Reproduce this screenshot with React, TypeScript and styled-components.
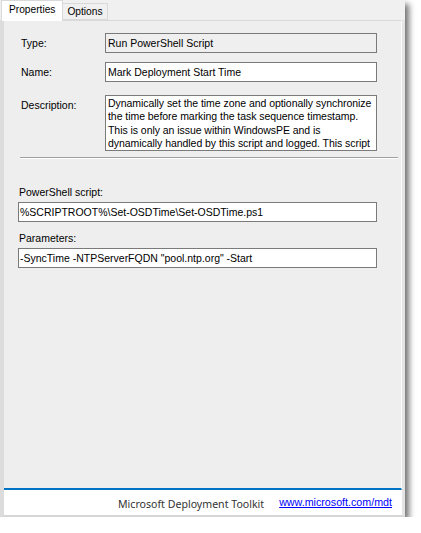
import React from 'react'
import styled, { createGlobalStyle } from 'styled-components'

const GlobalStyle = createGlobalStyle`
  html, body {
    margin: 0;
    padding: 0;
    background: #ffffff;
  }
  body {
    font-family: "Liberation Sans", Arial, sans-serif;
  }
`

const description = [
  'Dynamically set the time zone and optionally synchronize',
  'the time before marking the task sequence timestamp.',
  'This is only an issue within WindowsPE and is',
  'dynamically handled by this script and logged. This script',
]

const App: React.FC = () => {
  return (
    <>
      <GlobalStyle />
      <StyledWindow>
        <StyledTabStrip>
          <StyledTab active>Properties</StyledTab>
          <StyledTab>Options</StyledTab>
        </StyledTabStrip>
        <StyledBody>
          <StyledTabPage>
            <StyledFieldRow>
              <StyledLabel>Type:</StyledLabel>
              <StyledInput readOnly>Run PowerShell Script</StyledInput>
            </StyledFieldRow>
            <StyledFieldRow gap={9}>
              <StyledLabel>Name:</StyledLabel>
              <StyledInput>Mark Deployment Start Time</StyledInput>
            </StyledFieldRow>
            <StyledFieldRow gap={13}>
              <StyledLabel>Description:</StyledLabel>
              <StyledTextArea>
                {description.map((line) => (
                  <StyledTextLine key={line}>{line}</StyledTextLine>
                ))}
              </StyledTextArea>
            </StyledFieldRow>
            <StyledSeparator />
            <StyledStackLabel first>PowerShell script:</StyledStackLabel>
            <StyledWideInput>%SCRIPTROOT%\Set-OSDTime\Set-OSDTime.ps1</StyledWideInput>
            <StyledStackLabel>Parameters:</StyledStackLabel>
            <StyledWideInput>-SyncTime -NTPServerFQDN "pool.ntp.org" -Start</StyledWideInput>
          </StyledTabPage>
          <StyledFooter>
            <StyledBrand>Microsoft Deployment Toolkit</StyledBrand>
            <StyledLink href="#">www.microsoft.com/mdt</StyledLink>
          </StyledFooter>
        </StyledBody>
      </StyledWindow>
    </>
  )
}

const StyledWindow = styled.div`
  width: 405px;
  height: 517px;
  box-sizing: border-box;
  background: #f0f0f0;
  display: flex;
  flex-direction: column;
  box-shadow: 4px 4px 6px rgba(0, 0, 0, 0.55);
`

const StyledTabStrip = styled.div`
  height: 20px;
  display: flex;
  align-items: flex-end;
  padding-left: 1px;
  position: relative;
  z-index: 1;
`

const StyledTab = styled.div<{ active?: boolean }>`
  box-sizing: border-box;
  height: ${(p) => (p.active ? 21 : 17)}px;
  margin-bottom: ${(p) => (p.active ? -1 : 0)}px;
  padding: ${(p) => (p.active ? '2px 7px 0 7px' : '1px 4px 0 4px')};
  background: ${(p) => (p.active ? '#ffffff' : '#f0f0f0')};
  border: 1px solid #d9d9d9;
  border-bottom: ${(p) => (p.active ? 'none' : '1px solid #d9d9d9')};
  margin-left: ${(p) => (p.active ? 0 : -1)}px;
  font-size: 10.2px;
  line-height: 14px;
  color: #000;
`

const StyledBody = styled.div`
  flex: 1;
  display: flex;
  flex-direction: column;
  border-left: 4px solid #dcdcdc;
  border-right: 3px solid #e4e4e4;
  border-bottom: 2px solid #d6d6d6;
`

const StyledTabPage = styled.div`
  height: 470px;
  box-sizing: border-box;
  background: #eeeeee;
  border-top: 1px solid #d9d9d9;
  border-right: 1px solid #fbfbfb;
  border-bottom: 2px solid #0072c6;
  padding: 12px 0 0 14px;
  display: flex;
  flex-direction: column;
  align-items: flex-start;
`

const StyledFieldRow = styled.div<{ gap?: number }>`
  display: grid;
  grid-template-columns: 84px 272px;
  margin-top: ${(p) => p.gap || 0}px;
  padding-left: 3px;
`

const StyledLabel = styled.div`
  font-size: 10.5px;
  line-height: 13.3px;
  color: #000;
  padding-top: 4px;
`

const StyledInput = styled.div<{ readOnly?: boolean }>`
  box-sizing: border-box;
  height: 20px;
  border: 1px solid #7a7a7a;
  background: ${(p) => (p.readOnly ? '#efefef' : '#ffffff')};
  padding: 0 2px;
  font-size: 10.5px;
  line-height: 18px;
  color: #000;
  white-space: nowrap;
  overflow: hidden;
`

const StyledTextArea = styled.div`
  box-sizing: border-box;
  height: 56px;
  border: 1px solid #7a7a7a;
  background: #ffffff;
  padding: 1px 1px 0 2px;
  font-size: 10.5px;
  line-height: 13.3px;
  color: #000;
  overflow: hidden;
`

const StyledTextLine = styled.div`
  white-space: nowrap;
  letter-spacing: -0.05px;
`

const StyledSeparator = styled.div`
  width: 378px;
  margin: 6px 0 0 2px;
  height: 1px;
  background: #a0a0a0;
  border-bottom: 1px solid #ffffff;
`

const StyledStackLabel = styled.div<{ first?: boolean }>`
  font-size: 10.5px;
  line-height: 13px;
  color: #000;
  margin: ${(p) => (p.first ? 27 : 10)}px 0 3px 1px;
`

const StyledWideInput = styled.div`
  box-sizing: border-box;
  width: 359px;
  height: 20px;
  border: 1px solid #7a7a7a;
  background: #ffffff;
  padding: 0 1px;
  font-size: 10.5px;
  line-height: 18px;
  color: #000;
  white-space: nowrap;
  overflow: hidden;
`

const StyledFooter = styled.div`
  flex: 1;
  background: #ffffff;
  display: flex;
  justify-content: flex-end;
  align-items: center;
  gap: 15px;
  padding-right: 10px;
`

const StyledBrand = styled.span`
  font-family: "Noto Sans", "Open Sans", sans-serif;
  font-size: 10.6px;
  color: #333333;
  padding-top: 2px;
`

const StyledLink = styled.a`
  font-size: 10.7px;
  color: #0000ff;
  text-decoration: underline;
  margin-bottom: 2px;
`

export default App
